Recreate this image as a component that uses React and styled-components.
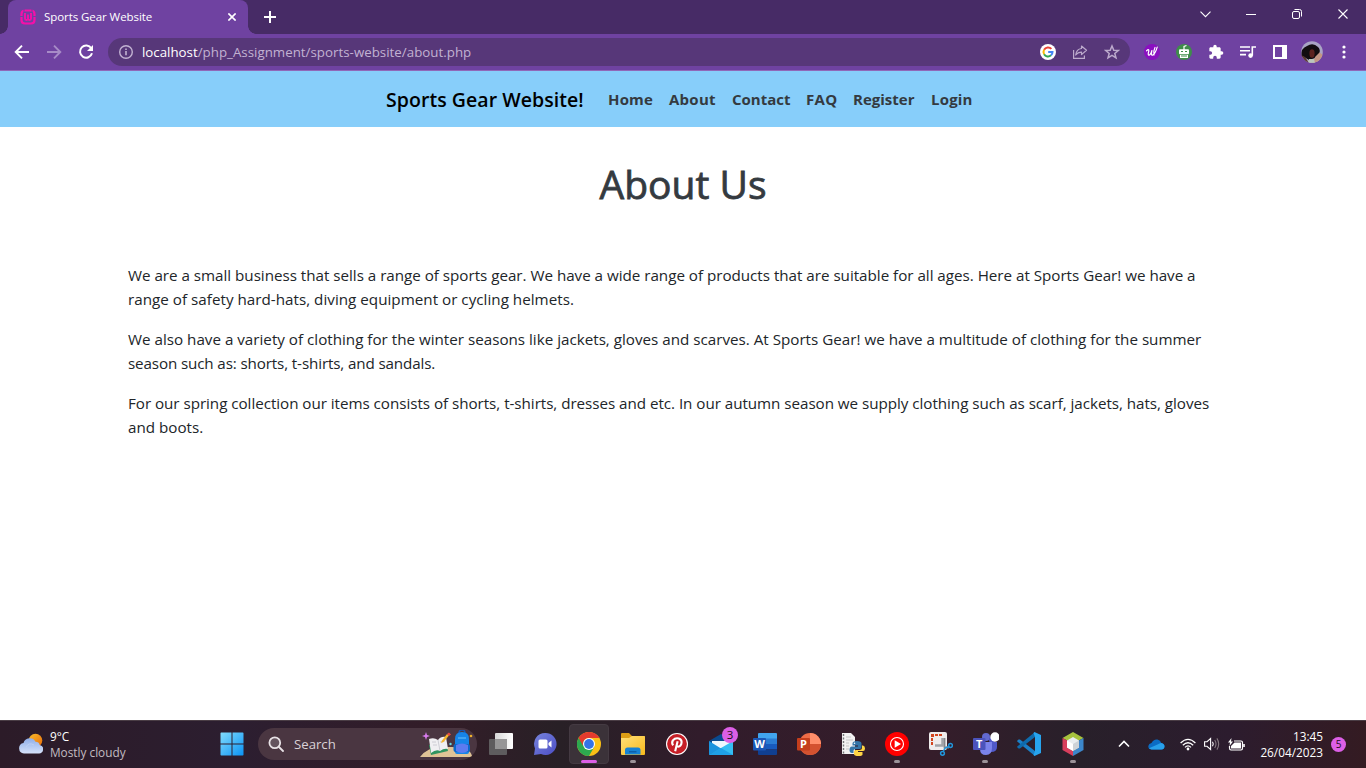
import React from "react";
import styled, { createGlobalStyle } from "styled-components";

const Global = createGlobalStyle`
  * { box-sizing: border-box; }
  body { margin: 0; background: #fff; font-family: "Open Sans", "Noto Sans", sans-serif; overflow: hidden; }
  svg { display: block; flex: none; }
`;

const Screen = styled.div`
  width: 1366px;
  height: 768px;
  display: flex;
  flex-direction: column;
  overflow: hidden;
`;

const Text = styled.span`
  white-space: nowrap;
  letter-spacing: ${(p) => p.$track || 0}px;
`;

/* ---------- browser window ---------- */

const TitleBar = styled.header`
  height: 34px;
  flex: none;
  display: flex;
  background: #472b66;
  padding-left: 8px;
`;

const Tab = styled.div`
  position: relative;
  width: 240px;
  height: 34px;
  display: flex;
  align-items: center;
  padding: 0 12px;
  background: #6f42a1;
  border-radius: 8px 8px 0 0;
  color: #fff;
  font-size: 11.5px;
  &::before,
  &::after {
    content: "";
    position: absolute;
    bottom: 0;
    width: 8px;
    height: 8px;
  }
  &::before {
    left: -8px;
    background: radial-gradient(circle at 0 0, transparent 7.5px, #6f42a1 8px);
  }
  &::after {
    right: -8px;
    background: radial-gradient(circle at 100% 0, transparent 7.5px, #6f42a1 8px);
  }
`;

const TabTitle = styled(Text)`
  flex: 1;
  margin-left: 8px;
  line-height: 16px;
  padding-bottom: 1px;
`;

const NewTab = styled.div`
  width: 44px;
  display: grid;
  place-items: center;
`;

const WindowButtons = styled.div`
  margin-left: auto;
  display: flex;
  height: 28px;
`;

const WindowButton = styled.div`
  width: 46px;
  display: grid;
  place-items: center;
`;

const Toolbar = styled.div`
  height: 37px;
  flex: none;
  display: flex;
  align-items: center;
  background: #6f42a1;
  border-bottom: 1px solid #9068b8;
`;

const NavButtons = styled.div`
  display: flex;
  width: 108px;
  padding-left: 6px;
`;

const ToolButton = styled.div`
  width: 32px;
  height: 28px;
  display: grid;
  place-items: center;
`;

const Omnibox = styled.div`
  width: 1022px;
  height: 28px;
  border-radius: 14px;
  background: #573779;
  display: flex;
  align-items: center;
  padding: 0 2px 0 10px;
`;

const Url = styled.div`
  flex: 1;
  display: flex;
  margin-left: 8px;
  font-size: 13.3px;
  color: #c2b2d2;
`;

const Host = styled(Text)`
  color: #fff;
`;

const Extensions = styled.div`
  display: flex;
  margin-left: 6px;
`;

/* ---------- web page ---------- */

const SiteNav = styled.nav`
  height: 56px;
  flex: none;
  display: flex;
  align-items: center;
  padding-left: 386px;
  background: #87cefa;
  font-weight: 700;
  font-size: 15px;
  color: #343a40;
`;

const Brand = styled.div`
  width: 214px;
  font-weight: 600;
  font-size: 19.5px;
  color: #000;
`;

const NavLink = styled.div`
  width: ${(p) => p.$width}px;
  padding: 0 8px;
`;

const Page = styled.main`
  flex: 1;
  padding: 33px 128px 0;
  color: #212529;
  font-size: 15.2px;
  line-height: 24px;
`;

const Heading = styled.h1`
  margin: 0 0 55px;
  text-align: center;
  font-size: 39px;
  font-weight: 400;
  -webkit-text-stroke: 0.8px #343a40;
  line-height: 48px;
  color: #343a40;
`;

const Paragraph = styled.p`
  margin: 0 0 16px;
`;

const Line = styled.span`
  display: block;
`;

/* ---------- taskbar ---------- */

const Taskbar = styled.footer`
  height: 48px;
  flex: none;
  display: flex;
  align-items: center;
  box-shadow: inset 0 1px #4a3d45;
  background: linear-gradient(90deg, #2c1b28 0, #2c1e30 240px, #331d28 440px, #282026 560px, #311c2b 700px, #351d2a 930px, #28202a 1080px, #2c1c2e 1230px, #341b22 1366px);
  color: #fff;
  font-size: 11.8px;
  line-height: 16px;
`;

const Weather = styled.div`
  width: 210px;
  display: flex;
  align-items: center;
  gap: 7px;
  padding-left: 18px;
`;

const Stack = styled.div`
  display: flex;
  flex-direction: column;
  padding-bottom: 1px;
  align-items: ${(p) => p.$align || "flex-start"};
`;

const Muted = styled.div`
  color: #c3bcc1;
`;

const AppButton = styled.div`
  position: relative;
  width: 44px;
  height: 48px;
  display: grid;
  place-items: center;
`;

const ActiveTile = styled.div`
  width: 40px;
  height: 40px;
  display: grid;
  place-items: center;
  border-radius: 4px;
  background: #3b3239;
  border: 1px solid #443a42;
`;

const Indicator = styled.i`
  position: absolute;
  bottom: 5px;
  left: 50%;
  width: ${(p) => (p.$active ? 16 : 6)}px;
  height: 3px;
  border-radius: 2px;
  transform: translateX(-50%);
  background: ${(p) => (p.$active ? "#dc5fe6" : "#9c9399")};
`;

const CountBadge = styled.b`
  position: absolute;
  top: 7px;
  left: 23px;
  width: 16px;
  height: 16px;
  border-radius: 8px;
  background: #dc5fe6;
  color: #1b1018;
  font-weight: 400;
  font-size: 11.5px;
  line-height: 15px;
  text-align: center;
`;

const SearchBox = styled.div`
  width: 219px;
  height: 32px;
  margin: 0 2px 0 4px;
  border-radius: 16px;
  display: flex;
  align-items: center;
  background: #4a3641;
  padding: 0 3px 0 10px;
  color: #d9d2d6;
  font-size: 13.2px;
`;

const SearchLabel = styled(Text)`
  flex: 1;
  margin-left: 10px;
  padding-bottom: 1px;
`;

const Tray = styled.div`
  flex: 1;
  display: flex;
  align-items: center;
  padding-left: 17px;
`;

const TrayItem = styled.div`
  width: ${(p) => p.$width}px;
  display: grid;
  place-items: center;
`;

const Clock = styled(Stack)`
  width: 75px;
`;

const Notice = styled.div`
  width: 15px;
  height: 15px;
  margin-left: 8px;
  border-radius: 50%;
  background: #dc5fe6;
  color: #1b1018;
  font-size: 10px;
  line-height: 15px;
  text-align: center;
`;

/* ---------- icons ---------- */

const Favicon = () => (
  <svg width="16" height="16" viewBox="0 0 16 16" fill="none" stroke="#f50fa9">
    <path d="M5 1.500H11Q14.500 1.500 14.500 5V11Q14.500 14.500 11 14.500H5Q1.500 14.500 1.500 11V5Q1.500 1.500 5 1.500Z" strokeWidth="2.200" />
    <path d="M0 7.500H3.500M12.500 7.500H16M4 0V3M12 0V3" stroke="#6f42a1" strokeWidth="1" />
    <path d="M5 4V9.500Q5 11 6.500 11Q8 11 8 9.500V5.500V9.500Q8 11 9.500 11Q11 11 11 9.500V4" strokeWidth="1.900" />
  </svg>
);

const Cross = ({ size = 8, weight = 1.5 }) => (
  <svg width={size} height={size} viewBox="0 0 10 10" stroke="#fff" strokeWidth={weight} fill="none">
    <path d="M.5 .5L9.5 9.5M9.5 .5L.5 9.5" />
  </svg>
);

const Plus = () => (
  <svg width="12" height="12" viewBox="0 0 12 12" stroke="#fff" strokeWidth="2">
    <path d="M6 0V12M0 6H12" />
  </svg>
);

const Arrow = ({ flip, color = "#fff" }) => (
  <svg width="16" height="16" viewBox="0 0 16 16" stroke={color} strokeWidth="1.9" fill="none">
    <path d={flip ? "M1 8H14M8 1.7L14.3 8L8 14.3" : "M15 8H2M8 1.7L1.7 8L8 14.3"} />
  </svg>
);

const Reload = () => (
  <svg width="16" height="16" viewBox="0 0 16 16" fill="none" stroke="#fff" strokeWidth="2">
    <path d="M13.3 4.3A6.1 6.1 0 1 0 14 9.3" />
    <path d="M15 1V7H9Z" fill="#fff" stroke="none" />
  </svg>
);

const Info = () => (
  <svg width="16" height="16" viewBox="0 0 16 16" fill="none" stroke="#c2b2d2" strokeWidth="1.4">
    <circle cx="8" cy="8" r="6.3" />
    <path d="M8 7V11.3M8 4.5V6" strokeWidth="1.6" />
  </svg>
);

const Google = () => (
  <svg width="16" height="16" viewBox="0 0 16 16" fill="none" strokeWidth="2">
    <circle cx="8" cy="8" r="8" fill="#fff" />
    <path d="M11.4 4.9A4.5 4.5 0 0 0 4.1 5.8" stroke="#ea4335" />
    <path d="M4.1 5.8A4.5 4.5 0 0 0 4.1 10.2" stroke="#fbbc05" />
    <path d="M4.1 10.2A4.5 4.5 0 0 0 11 11.3" stroke="#34a853" />
    <path d="M11 11.3A4.4 4.4 0 0 0 12.5 8H8.2" stroke="#4285f4" />
  </svg>
);

const Share = () => (
  <svg width="16" height="16" viewBox="0 0 16 16" fill="none" stroke="#bcaacc" strokeWidth="1.2">
    <path d="M1.6 6V14.4H12.4V11.5" />
    <path d="M9.5 2L14.5 6.3L9.5 10.6V8.2Q6 8 3.7 11Q4.5 5 9.5 4.5Z" strokeLinejoin="round" />
  </svg>
);

const Star = () => (
  <svg width="16" height="16" viewBox="0 0 16 16" fill="none" stroke="#bcaacc" strokeWidth="1.5">
    <path d="M8 2L9.8 6.200L14.200 6.500L10.8 9.400L12 13.900L8 11.400L4 13.900L5.2 9.400L1.800 6.500L6.2 6.200Z" />
  </svg>
);

const PurpleW = () => (
  <svg width="16" height="16" viewBox="0 0 16 16" fill="none" stroke="#fff" strokeWidth="1.2" strokeLinecap="round">
    <circle cx="8" cy="8" r="8" fill="#8a0fc0" stroke="none" />
    <path d="M2.6 6.8Q5 4.5 4.8 7Q3.5 11.5 5.2 11.2Q7 10.5 8 6.2Q6.7 11.8 8.6 11.2Q11.5 9.500 13.200 3.200M10 11Q9.500 6 11 3.500" />
  </svg>
);

const Robot = () => (
  <svg width="16" height="16" viewBox="0 0 16 16">
    <circle cx="8" cy="8" r="8" fill="#3f8c4b" />
    <path d="M8 6V2.5L10.5 1.5" stroke="#fff" strokeWidth="1.2" fill="none" />
    <rect x="3" y="5.3" width="10" height="5" rx="1" fill="#fff" />
    <rect x="4" y="11" width="8" height="3" fill="#fff" />
    <path d="M5 7.5H7M9 7.5H11M5 12H11" stroke="#3f8c4b" strokeWidth="1.2" />
  </svg>
);

const Puzzle = () => (
  <svg width="16" height="16" viewBox="0 0 24 24" fill="#fff">
    <path d="M20.5 11H19V7c0-1.1-.9-2-2-2h-4V3.5a2.5 2.5 0 0 0-5 0V5H4c-1.100 0-2 .9-2 2v3.800h1.500a2.700 2.700 0 0 1 0 5.400H2V20c0 1.100.9 2 2 2h3.800v-1.500a2.700 2.700 0 0 1 5.400 0V22H17c1.100 0 2-.9 2-2v-4h1.500a2.500 2.500 0 0 0 0-5z" />
  </svg>
);

const Playlist = () => (
  <svg width="16" height="14" viewBox="0 0 16 14" fill="none" stroke="#fff" strokeWidth="1.6">
    <path d="M0 2H10M0 5.800H10M0 9.600H6M12.300 10.500V2H16" />
    <circle cx="10.600" cy="10.600" r="2.300" fill="#fff" stroke="none" />
  </svg>
);

const SidePanel = () => (
  <svg width="14" height="14" viewBox="0 0 14 14">
    <path d="M0 0H14V14H0ZM2 2V12H9V2Z" fill="#fff" fillRule="evenodd" />
  </svg>
);

const Avatar = () => (
  <svg width="22" height="22" viewBox="0 0 22 22">
    <clipPath id="avatar"><circle cx="11" cy="11" r="10.800" /></clipPath>
    <g clipPath="url(#avatar)">
      <rect width="22" height="22" fill="#a9a4c4" />
      <path d="M0 15Q0 7 6 5Q12 1 17 6Q20 9 18 13L14 17L8 19L3 16Z" fill="#120d10" />
      <path d="M0 14L4 16L8 22H0Z" fill="#5a3630" />
      <ellipse cx="11" cy="12.500" rx="2.600" ry="4.200" fill="#5c2320" />
      <path d="M14 16L18.500 11.500L22 14V22H12Z" fill="#c39684" />
      <path d="M8 18L13 18L14 22H7Z" fill="#bcc6bd" />
    </g>
  </svg>
);

const Dots = () => (
  <svg width="4" height="14" viewBox="0 0 4 14" fill="#fff">
    <circle cx="2" cy="2" r="1.600" /><circle cx="2" cy="7" r="1.600" /><circle cx="2" cy="12" r="1.600" />
  </svg>
);

const CaretDown = () => (
  <svg width="11" height="7" viewBox="0 0 11 7" fill="none" stroke="#fff" strokeWidth="1.100"><path d="M.5 .7L5.500 5.700L10.500 .7" /></svg>
);
const Minimize = () => (
  <svg width="10" height="10" viewBox="0 0 10 10" stroke="#fff"><path d="M0 5.500H10" /></svg>
);
const Restore = () => (
  <svg width="10" height="10" viewBox="0 0 10 10" fill="none" stroke="#fff">
    <rect x=".5" y="2.500" width="7" height="7" rx="1.500" /><path d="M2.500 .5H7.500Q9.500 .5 9.500 2.500V7.500" />
  </svg>
);

const Cloudy = () => (
  <svg width="25" height="22" viewBox="0 0 25 22">
    <defs>
      <linearGradient id="cloud" x1="0" y1="0" x2="0" y2="1"><stop offset="0" stopColor="#8faee8" /><stop offset="1" stopColor="#d5e2fa" /></linearGradient>
      <linearGradient id="sun" x1="0" y1="0" x2="1" y2="1"><stop offset="0" stopColor="#f7bd2b" /><stop offset="1" stopColor="#ea6a08" /></linearGradient>
    </defs>
    <circle cx="17.500" cy="7.500" r="6.800" fill="url(#sun)" />
    <path d="M6 20.500A5.300 5.300 0 0 1 5.500 10A6.500 6.500 0 0 1 17.500 8.800Q21 8.800 21.700 12A4.300 4.300 0 0 1 20.500 20.500Z" fill="url(#cloud)" />
    <path d="M8 14Q11 9 16 12" stroke="#bdd0f4" fill="none" />
  </svg>
);

const Windows = () => (
  <svg width="24" height="24" viewBox="0 0 24 24">
    <defs><linearGradient id="win" x1="0" y1="0" x2="1" y2="1"><stop offset="0" stopColor="#82dcfb" /><stop offset="1" stopColor="#0b93f5" /></linearGradient></defs>
    <path fill="url(#win)" d="M.5 1.300A.8.8 0 0 1 1.300 .5H11.500V11.500H.5ZM12.500 .5H22.700A.8.8 0 0 1 23.500 1.300V11.500H12.500ZM.5 12.500H11.500V23.500H1.300A.8.8 0 0 1 .5 22.700ZM12.500 12.500H23.500V22.700A.8.8 0 0 1 22.700 23.500H12.500Z" />
  </svg>
);

const Magnifier = () => (
  <svg width="16" height="16" viewBox="0 0 16 16" fill="none" stroke="#e8e2e6" strokeWidth="1.800" strokeLinecap="round">
    <circle cx="6.800" cy="6.800" r="5.400" fill="#64545e" /><path d="M11 11L15 15" />
  </svg>
);

const SchoolArt = () => (
  <svg width="54" height="28" viewBox="0 0 54 28">
    <path d="M0 27Q9 15 28 17Q50 16 52 26L50 27Z" fill="#dfc396" />
    <path d="M9 15L26 13L28 21L11 25Z" fill="#2f9460" />
    <path d="M9 9Q14 7 18 10Q21 6 26 7L28 19Q24 18 20 21Q16 19 11 23Z" fill="#f0eff2" />
    <path d="M18 10L20 21M12 12L16 12M20 12L25 11M13 15L17 15" stroke="#c4c4cd" strokeWidth=".8" />
    <path d="M21 13L22 10.500L27 4L29 5.500L23.500 12Z" fill="#f5b52c" /><path d="M27 4L29 2.500L31 4.500L29 6Z" fill="#e84b41" />
    <path d="M6 2L7 5L10 6L7 7L6 10L5 7L2 6L5 5Z" fill="#d97cf0" />
    <path d="M39 3A3 3 0 0 1 45 3" fill="none" stroke="#1557b5" strokeWidth="1.500" />
    <path d="M35 22V9Q35 2 42 2T49 9V22Q49 24 47 24H37Q35 24 35 22Z" fill="#1684e8" />
    <rect x="33.500" y="14" width="16.500" height="8" rx="2" fill="#0c68ca" />
    <path d="M36 15Q42 12 48 15V21Q42 25 36 21Z" fill="#5c7bf0" /><path d="M38 8H46" stroke="#6cc3fb" />
    <circle cx="30.500" cy="14" r="1.200" fill="#68d6e4" /><circle cx="51" cy="6" r="1.300" fill="#eeb02c" />
  </svg>
);

const TaskView = () => (
  <svg width="24" height="24" viewBox="0 0 24 24">
    <defs><linearGradient id="tv" x1="0" x2="1"><stop offset="0" stopColor="#d7d7d7" /><stop offset="1" stopColor="#fff" /></linearGradient></defs>
    <rect x="6" y="1" width="18" height="16" rx="1" fill="url(#tv)" />
    <rect x="0" y="7" width="18" height="16" rx="1" fill="#5e5c5e" />
    <path d="M6 7H18V17H6Z" fill="#979697" />
  </svg>
);

const Chat = () => (
  <svg width="24" height="24" viewBox="0 0 24 24">
    <defs><linearGradient id="chat" x1="0" y1="0" x2="1" y2="1"><stop offset="0" stopColor="#7784dc" /><stop offset="1" stopColor="#4c4ec5" /></linearGradient></defs>
    <path d="M12 1A11 11 0 1 1 8 22L1 23L2 16.500A11 11 0 0 1 12 1Z" fill="url(#chat)" />
    <rect x="5.500" y="7.500" width="9" height="9" rx="1.500" fill="#fff" />
    <path d="M15.500 11L18.500 8.500V15.500L15.500 13Z" fill="#fff" />
  </svg>
);

const Chrome = () => (
  <svg width="24" height="24" viewBox="0 0 24 24">
    <circle cx="12" cy="12" r="12" fill="#fbc116" />
    <path d="M1.600 6A12 12 0 0 0 12 24L17.200 15L12 12Z" fill="#2da94f" />
    <path d="M1.600 6A12 12 0 0 1 22.400 6H12A6 6 0 0 0 6.800 15Z" fill="#e33b2e" />
    <circle cx="12" cy="12" r="6" fill="#fff" /><circle cx="12" cy="12" r="4.900" fill="#3473e8" />
  </svg>
);

const Folder = () => (
  <svg width="24" height="24" viewBox="0 0 24 24">
    <defs><linearGradient id="fold" x1="0" y1="0" x2="1" y2="1"><stop offset="0" stopColor="#ffe07a" /><stop offset="1" stopColor="#f8b91b" /></linearGradient></defs>
    <path d="M0 2Q0 1 1 1H8L11 4H23Q24 4 24 5V10H0Z" fill="#dd9e15" />
    <path d="M0 6H8L11 4H23Q24 4 24 5V22Q24 23 23 23H1Q0 23 0 22Z" fill="url(#fold)" />
    <path d="M4 22.500V18Q4 15.500 6.500 15.500H17Q19.500 15.500 19.500 18V22.500Z" fill="#1682d4" />
    <path d="M8 19H15.500V20.500H8Z" fill="#0c5ea8" />
  </svg>
);

const Pinterest = () => (
  <svg width="22" height="22" viewBox="0 0 24 24">
    <circle cx="12" cy="12" r="12" fill="#fff" /><circle cx="12" cy="12" r="10.800" fill="#c51f27" />
    <path d="M7.800 13.500Q5.800 10.800 7.500 8Q10 5 14 6Q18 7.500 16.700 12Q15 16 12 14.500M12.700 9L10 20" fill="none" stroke="#fff" strokeWidth="2.300" />
  </svg>
);

const Mail = () => (
  <svg width="24" height="24" viewBox="0 0 24 24">
    <path d="M0 9L12 2L24 9V16H0Z" fill="#0a4a8e" />
    <path d="M3 9H21V16H3Z" fill="#eef7fd" />
    <path d="M0 9L12 16.500L0 23Z" fill="#1a93de" /><path d="M24 9L0 23H24Z" fill="#35bdf2" />
    <path d="M0 23L12 16L24 23Z" fill="#1fa0e6" />
  </svg>
);

const Letter = styled.text`
  font: 700 11px "Open Sans", sans-serif;
  fill: #fff;
  text-anchor: middle;
`;

const Word = () => (
  <svg width="24" height="24" viewBox="0 0 24 24">
    <path d="M5 2Q5 1 6 1H23Q24 1 24 2V7H5Z" fill="#41a5ee" /><path d="M5 6.500H24V12H5Z" fill="#2b7cd3" />
    <path d="M5 12H24V17.500H5Z" fill="#185abd" /><path d="M5 17.500H24V22Q24 23 23 23H6Q5 23 5 22Z" fill="#103f91" />
    <rect y="6" width="13" height="12.500" rx="1" fill="#1b57b5" /><Letter x="6.500" y="16">W</Letter>
  </svg>
);

const PowerPoint = () => (
  <svg width="24" height="24" viewBox="0 0 24 24">
    <circle cx="13" cy="12" r="11" fill="#ed6c47" />
    <path d="M13 1A11 11 0 0 1 24 12H13Z" fill="#ff8f6b" /><path d="M2 12H24A11 11 0 0 1 2 12Z" fill="#d35230" />
    <rect y="6" width="13" height="12.500" rx="1" fill="#c43e1c" /><Letter x="6.500" y="16">P</Letter>
  </svg>
);

const PythonFile = () => (
  <svg width="24" height="24" viewBox="0 0 24 24">
    <path d="M1 1H10L14 5V22H1Z" fill="#f2f2f2" /><path d="M2.500 2V22" stroke="#77797a" strokeWidth="1.400" strokeDasharray="2 1.500" />
    <path d="M5 5H10M5 8H12M5 11H8M5 14H8M5 17H8" stroke="#c6c6c6" />
    <path d="M16 9Q11.500 9 11.500 11.500V13.500H17V14.500H11Q8.500 14.500 8.500 18Q8.500 21 11 21H12.500V18.500Q12.500 17 15 17H18.500Q20.500 17 20.500 15V11.500Q20.500 9 16 9Z" fill="#3475a8" />
    <path d="M21 13.500V16Q21 18 18.500 18H15Q13 18 13 20V22Q13 24 17.500 24T21.500 22V20H17V19H22Q24 19 24 16.500T22 13.500Z" fill="#ffd545" />
    <circle cx="13.500" cy="11.300" r=".8" fill="#fff" />
  </svg>
);

const YtMusic = () => (
  <svg width="24" height="24" viewBox="0 0 24 24">
    <circle cx="12" cy="12" r="12" fill="#f00" /><circle cx="12" cy="12" r="6.500" fill="none" stroke="#fff" strokeWidth="1.100" />
    <path d="M9.700 8.300L16 12L9.700 15.700Z" fill="#fff" />
  </svg>
);

const Snip = () => (
  <svg width="24" height="24" viewBox="0 0 24 24">
    <rect width="18" height="18" rx="2" fill="#eeecec" />
    <path d="M2 2H5V5H2ZM6 2H9V4H6ZM10 2H13V4H10ZM2 6H4V9H2ZM2 10H4V13H2Z" fill="#d2451e" />
    <path d="M6 13.500H13.500V6" fill="none" stroke="#a2a4a8" strokeWidth="2.500" /><path d="M15.500 6V15.500H20" fill="none" stroke="#85878b" strokeWidth="1.800" />
    <circle cx="13.500" cy="21.300" r="1.900" fill="none" stroke="#2196dc" strokeWidth="1.500" />
    <circle cx="21.500" cy="13.500" r="1.900" fill="none" stroke="#2196dc" strokeWidth="1.500" />
    <path d="M14.300 19.500L16 16L20 14.500" stroke="#2196dc" strokeWidth="1.400" fill="none" />
  </svg>
);

const Teams = () => (
  <svg width="28" height="24" viewBox="0 0 28 24">
    <circle cx="15" cy="5" r="4" fill="#6269cf" /><circle cx="21" cy="8" r="3" fill="#5059c9" />
    <path d="M19 10H26V15Q26 20 20 20Z" fill="#5059c9" />
    <path d="M9 10H21V16Q21 23 15 23T9 17Z" fill="#7b83eb" />
    <rect x="2" y="6" width="12.500" height="12" rx="1" fill="#4b53bc" /><Letter x="8.200" y="16">T</Letter>
    <circle cx="24" cy="5" r="4.700" fill="#fff" />
  </svg>
);

const VsCode = () => (
  <svg width="24" height="24" viewBox="0 0 24 24">
    <path d="M0 9L1.500 7.500L3 7.500L18 19V24L.5 9.800Z" fill="#1b80c8" />
    <path d="M0 15L1.500 16.500H3L18 5V0L.5 14.200Z" fill="#0e6bad" />
    <path d="M17.500 0L24 3V21L17.500 24L16.500 23L18 19V5L16.500 1Z" fill="#27a4ee" />
  </svg>
);

const NetBeans = () => (
  <svg width="22" height="24" viewBox="0 0 22 24">
    <path d="M11 0L21.500 6L16 9L11 6L6 9L.5 6Z" fill="#a7c33d" />
    <path d="M.5 6L6 9V16L11 19V24L.5 18Z" fill="#d73e5c" /><path d="M21.500 6L16 9V16L11 19V24L21.500 18Z" fill="#3c87cb" />
    <path d="M11 5L17 8.500V15.500L11 19L5 15.500V8.500Z" fill="#e9eef0" /><path d="M5 8.500L11 12V19L5 15.500Z" fill="#fff" /><path d="M11 12L17 8.500V15.500L11 19Z" fill="#cdd3d7" />
  </svg>
);

const CaretUp = () => (
  <svg width="12" height="8" viewBox="0 0 12 8" fill="none" stroke="#fff" strokeWidth="1.600"><path d="M1 6.500L6 1.500L11 6.500" /></svg>
);
const OneDrive = () => (
  <svg width="17" height="11" viewBox="0 0 17 11">
    <path d="M3.500 10.500Q0 10 .3 7Q.8 4.500 3.500 4Q5.500 0 9.500 .5Q12.500 1 13.300 4Q16.500 4.500 16.500 7.500Q16.300 10.500 13.500 10.500Z" fill="#0b6cc4" />
    <path d="M3.500 10.500Q1.800 10.300 1 9.300L9.500 5.500Q11.500 4 13.300 4Q16.500 4.500 16.500 7.500Q16.300 10.500 13.500 10.500Z" fill="#28a0ea" />
  </svg>
);
const Wifi = () => (
  <svg width="16" height="13" viewBox="0 0 16 13" fill="none" stroke="#fff" strokeWidth="1.300">
    <path d="M.6 5Q8 -2.300 15.400 5M2.800 7.300Q8 2.200 13.200 7.300M5 9.400Q8 6.400 11 9.400" /><circle cx="8" cy="11" r="1.400" fill="#fff" stroke="none" />
  </svg>
);
const Speaker = () => (
  <svg width="16" height="14" viewBox="0 0 16 14" fill="none" stroke="#fff" strokeWidth="1.100">
    <path d="M.6 4.700H3L6.600 1.500V12.500L3 9.300H.6Z" /><path d="M8.500 4.800Q10 7 8.500 9.200" />
    <path d="M10.700 3Q13.300 7 10.700 11M12.900 1.400Q16.500 7 12.900 12.600" stroke="#84787f" />
  </svg>
);
const Battery = () => (
  <svg width="17" height="13" viewBox="0 0 17 13" fill="none" stroke="#fff" strokeWidth="1.200">
    <path d="M6 3H13Q14.500 3 14.500 4.500V10Q14.500 12 13 12H3Q1.500 12 1.500 10V8" /><path d="M6.500 4.500H13V10.500H3V8Z" fill="#fff" stroke="none" />
    <path d="M16 6V9" strokeWidth="1.600" /><path d="M3.500 0L0 4.500H2L1.500 8L5 3.500H3Z" fill="#fff" stroke="none" />
  </svg>
);

/* ---------- data ---------- */

const links = [
  ["Home", 61, 0.15],
  ["About", 63, 0.25],
  ["Contact", 74, 0],
  ["FAQ", 47, 0.3],
  ["Register", 78, 0],
  ["Login", 60, 0.2],
];

const paragraphs = [
  [
    ["We are a small business that sells a range of sports gear. We have a wide range of products that are suitable for all ages. Here at Sports Gear! we have a", -0.018],
    ["range of safety hard-hats, diving equipment or cycling helmets.", 0.02],
  ],
  [
    ["We also have a variety of clothing for the winter seasons like jackets, gloves and scarves. At Sports Gear! we have a multitude of clothing for the summer", 0],
    ["season such as: shorts, t-shirts, and sandals.", -0.13],
  ],
  [
    ["For our spring collection our items consists of shorts, t-shirts, dresses and etc. In our autumn season we supply clothing such as scarf, jackets, hats, gloves", -0.037],
    ["and boots.", 0],
  ],
];

const apps = [
  { icon: TaskView },
  { icon: Chat },
  { icon: Chrome, active: true },
  { icon: Folder, running: true },
  { icon: Pinterest },
  { icon: Mail, count: 3 },
  { icon: Word },
  { icon: PowerPoint },
  { icon: PythonFile },
  { icon: YtMusic, running: true },
  { icon: Snip },
  { icon: Teams, running: true },
  { icon: VsCode },
  { icon: NetBeans, running: true },
];

export default function App() {
  return (
    <Screen>
      <Global />
      <TitleBar>
        <Tab>
          <Favicon />
          <TabTitle $track={-0.07}>Sports Gear Website</TabTitle>
          <Cross size={8} weight={2} />
        </Tab>
        <NewTab><Plus /></NewTab>
        <WindowButtons>
          <WindowButton><CaretDown /></WindowButton>
          <WindowButton><Minimize /></WindowButton>
          <WindowButton><Restore /></WindowButton>
          <WindowButton><Cross size={10} weight={1.1} /></WindowButton>
        </WindowButtons>
      </TitleBar>
      <Toolbar>
        <NavButtons>
          <ToolButton><Arrow /></ToolButton>
          <ToolButton><Arrow flip color="#a78bc7" /></ToolButton>
          <ToolButton><Reload /></ToolButton>
        </NavButtons>
        <Omnibox>
          <Info />
          <Url>
            <Host>localhost</Host>
            <Text $track={0.02}>/php_Assignment/sports-website/about.php</Text>
          </Url>
          <ToolButton><Google /></ToolButton>
          <ToolButton><Share /></ToolButton>
          <ToolButton><Star /></ToolButton>
        </Omnibox>
        <Extensions>
          <ToolButton><PurpleW /></ToolButton>
          <ToolButton><Robot /></ToolButton>
          <ToolButton><Puzzle /></ToolButton>
          <ToolButton><Playlist /></ToolButton>
          <ToolButton><SidePanel /></ToolButton>
          <ToolButton><Avatar /></ToolButton>
          <ToolButton><Dots /></ToolButton>
        </Extensions>
      </Toolbar>
      <SiteNav>
        <Brand><Text $track={0.05}>Sports Gear Website!</Text></Brand>
        {links.map(([label, width, track]) => (
          <NavLink key={label} $width={width}><Text $track={track}>{label}</Text></NavLink>
        ))}
      </SiteNav>
      <Page>
        <Heading><Text>About Us</Text></Heading>
        {paragraphs.map((lines, i) => (
          <Paragraph key={i}>
            {lines.map(([line, track]) => (
              <Line key={line}><Text $track={track}>{line}</Text></Line>
            ))}
          </Paragraph>
        ))}
      </Page>
      <Taskbar>
        <Weather>
          <Cloudy />
          <Stack>
            <Text>9°C</Text>
            <Muted><Text>Mostly cloudy</Text></Muted>
          </Stack>
        </Weather>
        <AppButton><Windows /></AppButton>
        <SearchBox>
          <Magnifier />
          <SearchLabel>Search</SearchLabel>
          <SchoolArt />
        </SearchBox>
        {apps.map(({ icon: Icon, active, running, count }, i) => (
          <AppButton key={i}>
            {active ? <ActiveTile><Icon /></ActiveTile> : <Icon />}
            {(active || running) && <Indicator $active={active} />}
            {count && <CountBadge>{count}</CountBadge>}
          </AppButton>
        ))}
        <Tray>
          <TrayItem $width={24}><CaretUp /></TrayItem>
          <TrayItem $width={40}><OneDrive /></TrayItem>
          <TrayItem $width={24}><Wifi /></TrayItem>
          <TrayItem $width={24}><Speaker /></TrayItem>
          <TrayItem $width={24}><Battery /></TrayItem>
          <Clock $align="flex-end">
            <Text>13:45</Text>
            <Text>26/04/2023</Text>
          </Clock>
          <Notice>5</Notice>
        </Tray>
      </Taskbar>
    </Screen>
  );
}
